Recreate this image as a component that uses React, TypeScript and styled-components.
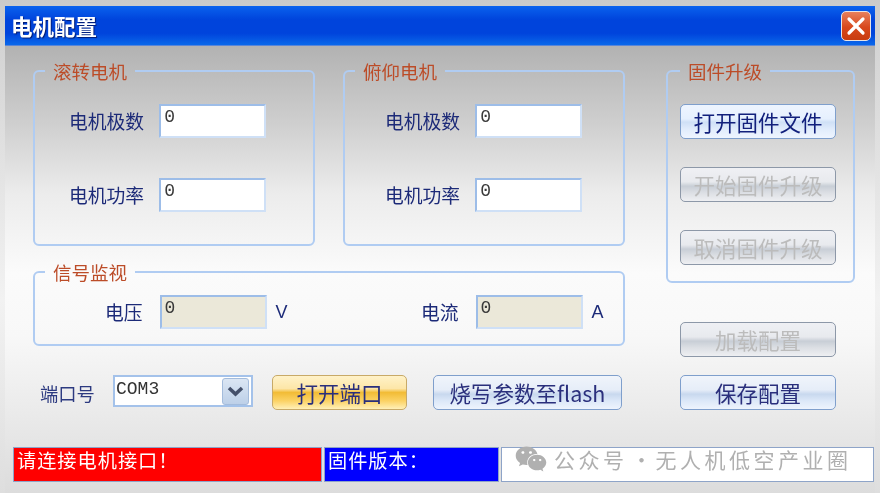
import React from 'react'
import styled, { createGlobalStyle } from 'styled-components'
import { FaWeixin } from 'react-icons/fa'

const GlobalStyle = createGlobalStyle`
  html, body {
    margin: 0;
    height: 493px;
    overflow: hidden;
    background: linear-gradient(#cacaca 0, #d4d4d4 46px, #f2f2f2 300px, #dedede 493px);
    font-family: "Noto Sans CJK SC", "Liberation Sans", sans-serif;
  }
`

const Page = styled.div`
  padding: 6px 0 0 5px;
  filter: blur(0.4px);
`

const Window = styled.div`
  width: 870px;
  height: 487px;
  background: linear-gradient(#b2b2b2 0, #b2b2b2 40px, #cfcfcf 118px, #ececec 188px, #fbfbfb 268px, #f8f8f8 330px, #dcdcdc 487px);
`

const TitleBar = styled.div`
  height: 40px;
  box-sizing: border-box;
  padding: 0 4px 0 6px;
  display: flex;
  align-items: center;
  justify-content: space-between;
  background: linear-gradient(#0a62ee 0, #0044dc 35%, #0044dc 70%, #0a68ea 100%);
  border-bottom: 1px solid #5a86d8;
`

const Title = styled.div`
  color: #fff;
  font-size: 21.5px;
  font-weight: 700;
  text-shadow: 1px 1px 1px #001a70;
`

const CloseButton = styled.div`
  width: 30px;
  height: 30px;
  box-sizing: border-box;
  display: flex;
  align-items: center;
  justify-content: center;
  border: 1.5px solid #e8e4e4;
  border-radius: 5px;
  background: linear-gradient(#e8805c, #d8481c 55%, #c83c10);
`

const Content = styled.div`
  display: grid;
  grid-template-columns: 592px 189px;
  column-gap: 41px;
  padding: 15px 0 0 28px;
`

const LeftColumn = styled.div`
  display: flex;
  flex-direction: column;
`

const RightColumn = styled.div`
  display: flex;
  flex-direction: column;
`

const MotorGroups = styled.div`
  display: grid;
  grid-template-columns: 282px 282px;
  column-gap: 28px;
`

const Group = styled.fieldset<{ $height: number; $top: number }>`
  margin: 0;
  min-width: 0;
  height: ${(p) => p.$height}px;
  box-sizing: border-box;
  padding: ${(p) => p.$top}px 0 0;
  border: 2px solid #b0ccf2;
  border-radius: 6px;
`

const SignalGroup = styled(Group)`
  margin-top: 16px;
`

const Legend = styled.legend<{ $offset?: number }>`
  margin-left: ${(p) => p.$offset ?? 10}px;
  padding: 0 8px;
  color: #bc4c28;
  font-size: 18.5px;
  line-height: 20px;
`

const FieldStack = styled.div<{ $inset: number }>`
  display: flex;
  flex-direction: column;
  gap: 40px;
  padding-left: ${(p) => p.$inset}px;
`

const Field = styled.div`
  display: flex;
  align-items: center;
  gap: 15px;
`

const Label = styled.span`
  color: #1c2a78;
  font-size: 18.8px;
  line-height: 34px;
  white-space: nowrap;
`

const ValueInput = styled.input`
  width: 107px;
  height: 34px;
  box-sizing: border-box;
  padding: 0 0 8px 3px;
  border: 2px solid #cfe0f6;
  border-top-color: #9dbde8;
  border-left-color: #9dbde8;
  border-radius: 0;
  outline: none;
  background: ${(p) => (p.disabled ? '#ebe8d9' : '#fff')};
  color: #3a3a3a;
  font-family: "Liberation Mono", monospace;
  font-size: 18px;
`

const MonitorRow = styled.div`
  display: grid;
  grid-template-columns: 316px 1fr;
  padding-left: 70px;
`

const MonitorField = styled.div`
  display: flex;
  align-items: center;
  gap: 17px;
`

const Unit = styled.span`
  margin-left: -8px;
  color: #1c2a78;
  font-family: "Liberation Sans", sans-serif;
  font-size: 18px;
`

const PortRow = styled.div`
  display: flex;
  align-items: flex-start;
  margin-top: 29px;
  padding-left: 7px;
`

const PortLabel = styled.span`
  width: 73px;
  margin-top: 1px;
  color: #2c3a80;
  font-size: 18.3px;
  line-height: 34px;
`

const PortSelect = styled.div`
  width: 140px;
  height: 32px;
  box-sizing: border-box;
  margin-right: 19px;
  padding: 0 2px 0 1px;
  display: flex;
  align-items: center;
  justify-content: space-between;
  border: 2px solid #a4c2ea;
  background: #fff;
  color: #333;
  font-family: "Liberation Mono", monospace;
  font-size: 18px;
`

const PortValue = styled.span`
  margin-bottom: 4px;
`

const SelectArrow = styled.div`
  width: 25px;
  height: 25px;
  display: flex;
  align-items: center;
  justify-content: center;
  border: 1px solid #a4bcdc;
  border-radius: 3px;
  background: linear-gradient(#dbe6f4, #bdd0e8);
`

const Button = styled.div<{ $width?: number; $tone?: 'orange' | 'off' | 'active' }>`
  width: ${(p) => p.$width ?? 156}px;
  height: 35px;
  flex: none;
  box-sizing: border-box;
  display: flex;
  align-items: center;
  justify-content: center;
  border: 1.5px solid ${(p) => (p.$tone === 'orange' ? '#c8aa68' : p.$tone === 'off' ? '#8d98a8' : '#7f9fcc')};
  border-radius: 5px;
  background: ${(p) =>
    p.$tone === 'orange'
      ? 'linear-gradient(#fff2c8, #fde6a8 38%, #f2bc36 50%, #fbd264 75%, #fff0b8)'
      : p.$tone === 'off'
        ? 'linear-gradient(#eff0f4, #e8eaee 42%, #c8ced6 55%, #dcdfe4 75%, #eeeff2)'
        : p.$tone === 'active'
          ? 'linear-gradient(#eef5ff, #e6f0fe 42%, #cfe0f6 52%, #e2edfc 75%, #eef5ff)'
          : 'linear-gradient(#f0f4fb, #e6edf8 42%, #c8d8ee 55%, #dce8f8 75%, #eef4fd)'};
  color: ${(p) => (p.$tone === 'off' ? '#bcbcbc' : p.$tone === 'active' ? '#12207c' : '#2a2f7c')};
  font-size: 21.5px;
  line-height: 1;
  white-space: nowrap;
`

const PortButton = styled(Button)`
  margin-right: 26px;
`

const FirmwareStack = styled.div`
  display: flex;
  flex-direction: column;
  gap: 28px;
  padding-left: 12px;
`

const ConfigStack = styled.div`
  display: flex;
  flex-direction: column;
  gap: 18px;
  margin-top: 39px;
  padding-left: 14px;
`

const StatusBar = styled.div`
  display: flex;
  gap: 2px;
  height: 35px;
  margin-top: 37px;
  padding-left: 8px;
`

const StatusCell = styled.div<{ $width: number; $fill: string }>`
  position: relative;
  width: ${(p) => p.$width}px;
  box-sizing: border-box;
  padding-left: 3px;
  border: 1.5px solid #8ea4c8;
  background: ${(p) => p.$fill};
  color: #fff;
  font-size: 19.2px;
  letter-spacing: 1px;
  line-height: 24px;
`

const Watermark = styled.div`
  position: absolute;
  top: -5px;
  left: 13px;
  display: flex;
  align-items: center;
  color: #b0b0b0;
  font-size: 21px;
  letter-spacing: 3.5px;
  line-height: 32px;
  white-space: nowrap;
`

const WatermarkText = styled.span`
  margin-left: 7px;
`

const WatermarkDot = styled.span`
  display: inline-block;
  width: 28px;
  text-align: center;
  letter-spacing: 0;
`

const MotorGroup = ({ title, inset }: { title: string; inset: number }) => (
  <Group $height={185} $top={23}>
    <Legend>{title}</Legend>
    <FieldStack $inset={inset}>
      <Field>
        <Label>电机极数</Label>
        <ValueInput readOnly value="0" />
      </Field>
      <Field>
        <Label>电机功率</Label>
        <ValueInput readOnly value="0" />
      </Field>
    </FieldStack>
  </Group>
)

export default function App() {
  return (
    <Page>
      <GlobalStyle />
      <Window>
        <TitleBar>
          <Title>电机配置</Title>
          <CloseButton>
            <svg width="20" height="20" viewBox="0 0 20 20">
              <path d="M3 3 L17 17 M17 3 L3 17" stroke="#fff" strokeWidth="3.2" strokeLinecap="round" />
            </svg>
          </CloseButton>
        </TitleBar>
        <Content>
          <LeftColumn>
            <MotorGroups>
              <MotorGroup title="滚转电机" inset={34} />
              <MotorGroup title="俯仰电机" inset={40} />
            </MotorGroups>
            <SignalGroup $height={84} $top={13}>
              <Legend>信号监视</Legend>
              <MonitorRow>
                <MonitorField>
                  <Label>电压</Label>
                  <ValueInput disabled value="0" />
                  <Unit>V</Unit>
                </MonitorField>
                <MonitorField>
                  <Label>电流</Label>
                  <ValueInput disabled value="0" />
                  <Unit>A</Unit>
                </MonitorField>
              </MonitorRow>
            </SignalGroup>
            <PortRow>
              <PortLabel>端口号</PortLabel>
              <PortSelect>
                <PortValue>COM3</PortValue>
                <SelectArrow>
                  <svg width="17" height="11" viewBox="0 0 17 11">
                    <path d="M2 2 L8.5 8 L15 2" fill="none" stroke="#44506a" strokeWidth="3.6" />
                  </svg>
                </SelectArrow>
              </PortSelect>
              <PortButton $width={135} $tone="orange">打开端口</PortButton>
              <Button $width={189}>烧写参数至flash</Button>
            </PortRow>
          </LeftColumn>
          <RightColumn>
            <Group $height={222} $top={23}>
              <Legend $offset={12}>固件升级</Legend>
              <FirmwareStack>
                <Button $tone="active">打开固件文件</Button>
                <Button $tone="off">开始固件升级</Button>
                <Button $tone="off">取消固件升级</Button>
              </FirmwareStack>
            </Group>
            <ConfigStack>
              <Button $tone="off">加载配置</Button>
              <Button>保存配置</Button>
            </ConfigStack>
          </RightColumn>
        </Content>
        <StatusBar>
          <StatusCell $width={309} $fill="#ff0000">请连接电机接口！</StatusCell>
          <StatusCell $width={175} $fill="#0000ff">固件版本：</StatusCell>
          <StatusCell $width={373} $fill="#ffffff">
            <Watermark>
              <FaWeixin size={32} />
              <WatermarkText>
                公众号<WatermarkDot>·</WatermarkDot>无人机低空产业圈
              </WatermarkText>
            </Watermark>
          </StatusCell>
        </StatusBar>
      </Window>
    </Page>
  )
}
